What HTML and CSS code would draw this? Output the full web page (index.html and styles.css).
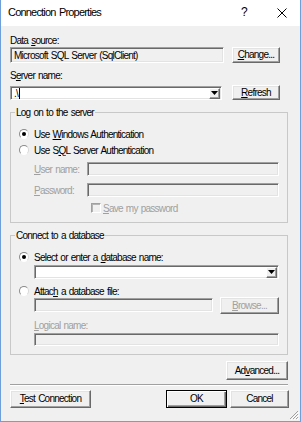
FILE: index.html
```html
<!DOCTYPE html>
<html>
<head>
<meta charset="utf-8">
<link rel="stylesheet" href="styles.css">
</head>
<body>
<div class="window">
  <div class="titlebar">
    <span class="title">Connection Properties</span>
    <span class="help">?</span>
    <svg class="close" width="10" height="10" viewBox="0 0 10 10"><path d="M0.5 0.5 L9.5 9.5 M9.5 0.5 L0.5 9.5" stroke="#000" stroke-width="1" fill="none"/></svg>
  </div>
  <div class="content">
    <div class="label lbl-ds">Data <u>s</u>ource:</div>
    <div class="row row-ds">
      <div class="textbox disabled ds-box">Microsoft SQL Server (SqlClient)</div>
      <button class="btn btn-side"><u>C</u>hange...</button>
    </div>
    <div class="label lbl-sn">S<u>e</u>rver name:</div>
    <div class="row row-sn">
      <div class="textbox combo sn-combo"><span class="combo-text">.\<span class="caret"></span></span><span class="drop"><svg width="7" height="4" viewBox="0 0 7 4"><path d="M0 0 H7 L3.5 4 Z" fill="#000"/></svg></span></div>
      <button class="btn btn-side"><u>R</u>efresh</button>
    </div>

    <fieldset class="group group-logon">
      <legend>Log on to the server</legend>
      <div class="option-row opt-win"><span class="radio checked"></span><span class="opt-text">Use <u>W</u>indows Authentication</span></div>
      <div class="option-row"><span class="radio"></span><span class="opt-text">Use S<u>Q</u>L Server Authentication</span></div>
      <div class="cred-row cred-user"><span class="cred-label"><u>U</u>ser name:</span><div class="textbox disabled cred-input"></div></div>
      <div class="cred-row cred-pass"><span class="cred-label"><u>P</u>assword:</span><div class="textbox disabled cred-input"></div></div>
      <div class="check-row"><span class="checkbox"></span><span class="dim"><u>S</u>ave my password</span></div>
    </fieldset>

    <fieldset class="group group-db">
      <legend>Connect to a database</legend>
      <div class="option-row opt-select"><span class="radio checked"></span><span class="opt-text">Select or enter a <u>d</u>atabase name:</span></div>
      <div class="textbox combo db-combo"><span class="combo-text"></span><span class="drop"><svg width="7" height="4" viewBox="0 0 7 4"><path d="M0 0 H7 L3.5 4 Z" fill="#000"/></svg></span></div>
      <div class="option-row opt-attach"><span class="radio"></span><span class="opt-text">Attac<u>h</u> a database file:</span></div>
      <div class="attach-row">
        <div class="textbox disabled attach-input"></div>
        <button class="btn btn-browse dim"><u>B</u>rowse...</button>
      </div>
      <div class="label dim lbl-logical"><u>L</u>ogical name:</div>
      <div class="textbox disabled logical-input"></div>
    </fieldset>

    <div class="advanced-row"><button class="btn btn-advanced">Ad<u>v</u>anced...</button></div>
    <div class="separator"></div>
    <div class="bottom-row">
      <button class="btn btn-test"><u>T</u>est Connection</button>
      <button class="btn btn-default btn-ok">OK</button>
      <button class="btn btn-cancel">Cancel</button>
    </div>
  </div>
  <svg class="grip" width="10" height="10" viewBox="0 0 10 10"><path d="M9 1 L1 9 M9 4 L4 9 M9 7 L7 9" stroke="#a0a0a0" stroke-width="1" fill="none"/><path d="M10 2 L2 10 M10 5 L5 10 M10 8 L8 10" stroke="#fff" stroke-width="1" fill="none"/></svg>
</div>
</body>
</html>
```
FILE: styles.css
```css
html, body {
  margin: 0;
  padding: 0;
  background: #f0f0f0;
}
.window {
  position: relative;
  width: 301px;
  height: 422px;
  box-sizing: border-box;
  border: 1px solid #6f9fd8;
  border-top: none;
  background: #f0f0f0;
  font-family: "Liberation Sans", Arial, sans-serif;
  font-size: 10px;
  letter-spacing: -0.75px;
  word-spacing: 1px;
  line-height: 13px;
  color: #000;
  display: flex;
  flex-direction: column;
  overflow: hidden;
}
u { text-decoration: underline; text-underline-offset: 1px; }
.titlebar {
  height: 26px;
  background: #fff;
  display: flex;
  align-items: center;
  padding-left: 7px;
  padding-bottom: 1px;
  box-sizing: border-box;
}
.title {
  font-size: 11px;
  letter-spacing: -0.8px;
  flex: 1;
}
.help {
  font-size: 12px;
  letter-spacing: 0;
  width: 10px;
  margin-right: 26px;
}
.close {
  margin-right: 13px;
}
.content {
  flex: 1;
  display: flex;
  flex-direction: column;
  padding: 0 12px 0 9px;
}
.label { height: 13px; white-space: nowrap; }
.lbl-ds { margin-top: 8px; }
.lbl-sn { margin-top: 6px; }
.row { display: flex; align-items: flex-start; }
.row-ds { height: 16px; }
.row-sn { margin-top: 3px; height: 15px; }

.textbox {
  box-sizing: border-box;
  border: 1px solid;
  border-color: #a0a0a0 #ffffff #ffffff #a0a0a0;
  box-shadow: inset 1px 1px #696969, inset -1px -1px #e3e3e3;
  background: #fff;
  white-space: nowrap;
  overflow: hidden;
}
.textbox.disabled { background: #f0f0f0; }
.ds-box {
  width: 214px;
  height: 16px;
  margin-right: 8px;
  padding: 1px 3px 0 3px;
  line-height: 13px;
}
.combo {
  display: flex;
  align-items: center;
  padding: 1px 1px 1px 3px;
}
.combo-text { flex: 1; line-height: 11px; }
.caret {
  display: inline-block;
  width: 1px;
  height: 11px;
  background: #000;
  vertical-align: top;
  margin-left: 1px;
}
.drop {
  width: 11px;
  height: 11px;
  box-sizing: border-box;
  border: 1px solid;
  border-color: #fff #696969 #696969 #fff;
  box-shadow: inset -1px -1px #a0a0a0;
  background: #f0f0f0;
  display: flex;
  align-items: center;
  justify-content: center;
}
.sn-combo {
  width: 212px;
  height: 14px;
  margin-top: 1px;
  margin-right: 10px;
}

.btn {
  font: inherit;
  letter-spacing: inherit;
  word-spacing: inherit;
  line-height: 12px;
  color: #000;
  background: #f0f0f0;
  box-sizing: border-box;
  border: 1px solid;
  border-color: #fff #696969 #696969 #fff;
  box-shadow: inset -1px -1px #a0a0a0, inset 1px 1px #e3e3e3;
  padding: 0;
  margin: 0;
  text-align: center;
  white-space: nowrap;
}
.btn-side { width: 48px; height: 16px; }
.row-sn .btn-side { height: 15px; }
.btn-default {
  border: 1px solid #000;
  box-shadow: inset 1px 1px #fff, inset -1px -1px #696969, inset -2px -2px #a0a0a0;
}
.dim { color: #a0a0a0; }

.group {
  margin: 0;
  border: 1px solid #c8c8c8;
  padding: 0 8px 8px 8px;
  min-width: 0;
}
.group legend {
  padding: 0 1px;
  margin-left: -4px;
  line-height: 13px;
  height: 13px;
}
.group-logon { margin-top: 6px; }
.group-db { margin-top: 6px; padding-bottom: 8px; }

.option-row {
  display: flex;
  align-items: center;
  height: 16px;
  white-space: nowrap;
}
.opt-text { white-space: pre; }
.opt-win { margin-top: 7px; }
.opt-select { margin-top: 7px; }
.opt-attach { margin-top: 5px; height: 14px; }
.radio {
  position: relative;
  width: 10px;
  height: 10px;
  box-sizing: border-box;
  border-radius: 50%;
  border: 1px solid;
  border-color: #8a8a8a #d8d8d8 #ffffff #8a8a8a;
  background: #fff;
  margin-right: 5px;
  flex: none;
}
.radio.checked::after {
  content: "";
  position: absolute;
  left: 2px;
  top: 2px;
  width: 4px;
  height: 4px;
  border-radius: 50%;
  background: #000;
}
.cred-row {
  display: flex;
  align-items: center;
  height: 14px;
  padding-left: 15px;
}
.cred-user { margin-top: 4px; }
.cred-pass { margin-top: 7px; }
.cred-label {
  width: 53px;
  flex: none;
  color: #a0a0a0;
  white-space: nowrap;
}
.cred-input { flex: 1; height: 14px; }
.check-row {
  display: flex;
  align-items: center;
  height: 12px;
  margin-top: 5px;
  padding-left: 72px;
  white-space: nowrap;
}
.checkbox {
  width: 10px;
  height: 10px;
  box-sizing: border-box;
  border: 1px solid;
  border-color: #a0a0a0 #fff #fff #a0a0a0;
  box-shadow: inset 1px 1px #b4b4b4;
  background: #f0f0f0;
  margin-right: 2px;
  flex: none;
}
.db-combo {
  margin-left: 15px;
  height: 14px;
}
.attach-row {
  display: flex;
  align-items: flex-start;
  height: 17px;
  margin-left: 15px;
  margin-top: -1px;
}
.attach-input {
  width: 179px;
  height: 14px;
  margin-top: 1px;
  margin-right: 7px;
}
.btn-browse { flex: 1; height: 17px; color: #a0a0a0; }
.lbl-logical { margin-left: 15px; margin-top: 5px; }
.logical-input { margin-left: 15px; margin-top: 1px; height: 13px; }

.advanced-row {
  display: flex;
  justify-content: flex-end;
  margin-top: 6px;
}
.btn-advanced { width: 62px; height: 19px; }
.separator {
  margin-top: 4px;
  height: 0;
  border-top: 1px solid #a0a0a0;
  border-bottom: 1px solid #fff;
}
.bottom-row {
  display: flex;
  margin-top: 4px;
  margin-right: -1px;
  height: 18px;
}
.btn-test { width: 81px; height: 18px; }
.btn-ok { width: 61px; height: 18px; margin-left: auto; margin-right: 3px; }
.btn-cancel { width: 59px; height: 18px; }
.grip {
  position: absolute;
  right: 1px;
  bottom: 1px;
}
```
